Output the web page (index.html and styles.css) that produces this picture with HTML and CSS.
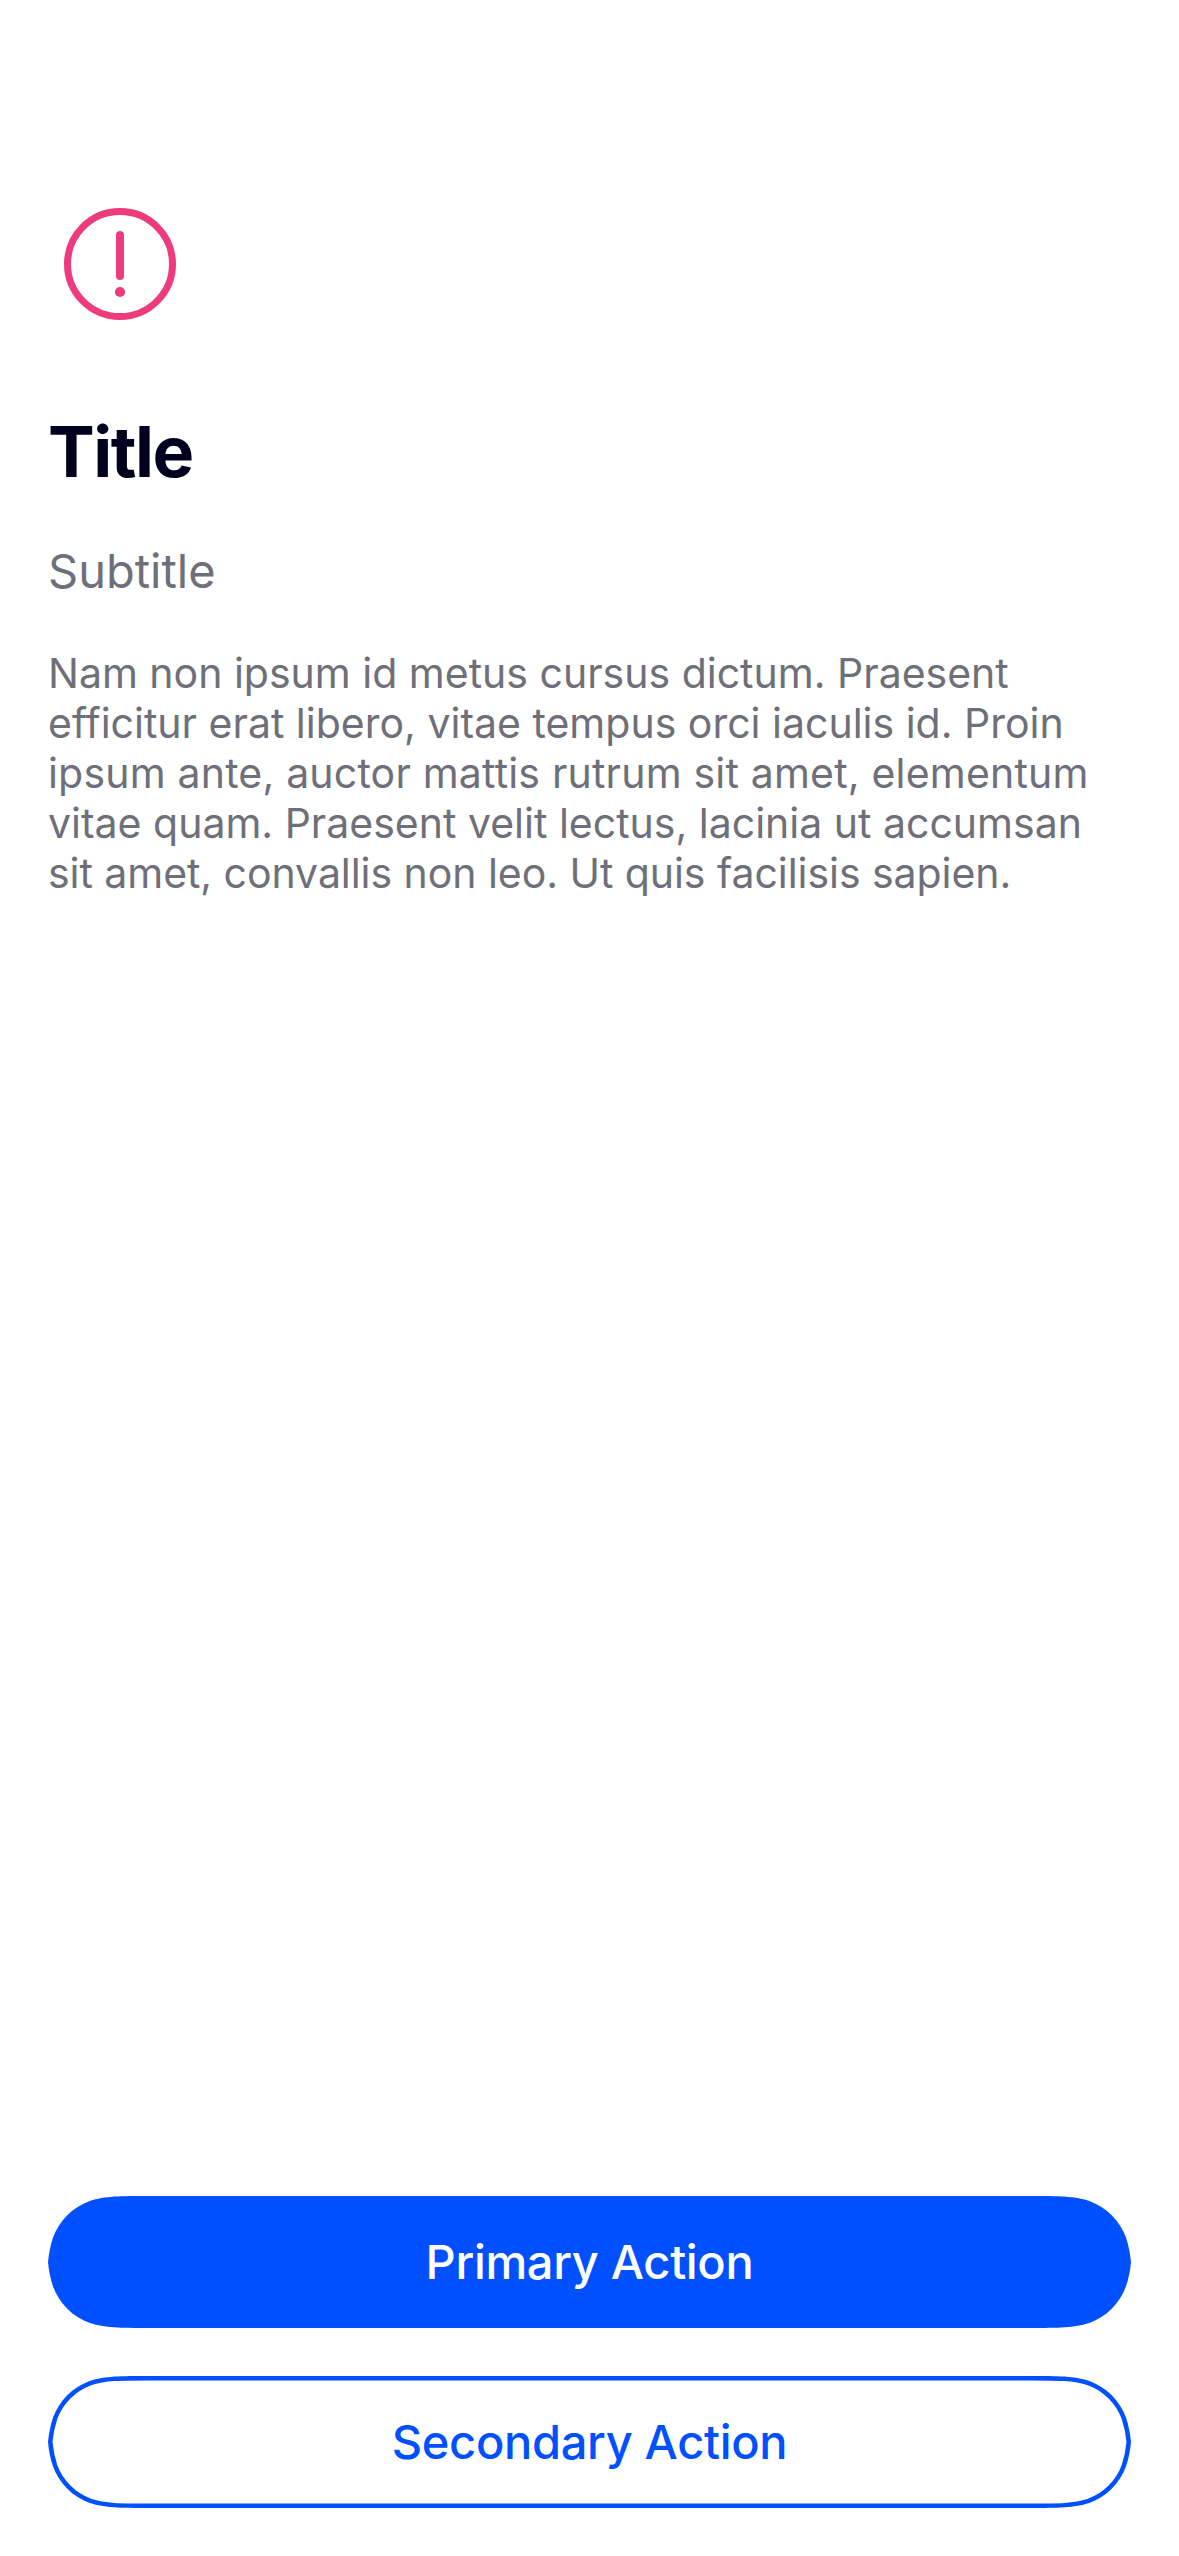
FILE: index.html
```html
<!DOCTYPE html>
<html lang="en">
<head>
<meta charset="utf-8">
<meta name="viewport" content="width=device-width">
<title>Alert</title>
<link rel="stylesheet" href="styles.css">
</head>
<body>
<main class="screen">
  <svg class="alert-icon" viewBox="0 0 144 144" aria-hidden="true">
    <circle class="alert-ring" cx="72" cy="72" r="52.5"/>
    <path class="alert-bar" d="M72 43v41"/>
    <circle class="alert-dot" cx="72" cy="100" r="5.1"/>
  </svg>
  <h1 class="title">Title</h1>
  <p class="subtitle">Subtitle</p>
  <p class="body">Nam non ipsum id metus cursus dictum. Praesent<br>efficitur erat libero, vitae tempus orci iaculis id. Proin<br><span class="loose">ipsum ante, auctor mattis rutrum sit amet, elementum</span><br>vitae quam. Praesent velit lectus, lacinia ut accumsan<br><span class="tight">sit amet, convallis non leo. Ut quis facilisis sapien.</span></p>
  <div class="actions">
    <button class="button primary" type="button">
      <svg class="button-shape" viewBox="0 0 1083 132" aria-hidden="true">
        <path d="M101 0H982C1011 0 1025.700 0 1041.300 4.940C1058.400 11.200 1071.800 24.600 1078.060 41.700C1080.500 49 1082.300 58 1083 66C1082.300 74 1080.500 83 1078.060 90.300C1071.800 107.400 1058.400 120.800 1041.300 127.060C1025.700 132 1011 132 982 132H101C72 132 57.300 132 41.700 127.060C24.600 120.800 11.200 107.400 4.940 90.300C2.500 83 .7 74 0 66C.7 58 2.500 49 4.940 41.700C11.200 24.600 24.600 11.200 41.700 4.940C57.300 0 72 0 101 0Z"/>
      </svg>
      <span class="button-label">Primary Action</span>
    </button>
    <button class="button secondary" type="button">
      <svg class="button-shape" viewBox="0 0 1083 132" aria-hidden="true">
        <clipPath id="pill"><path d="M101 0H982C1011 0 1025.700 0 1041.300 4.940C1058.400 11.200 1071.800 24.600 1078.060 41.700C1080.500 49 1082.300 58 1083 66C1082.300 74 1080.500 83 1078.060 90.300C1071.800 107.400 1058.400 120.800 1041.300 127.060C1025.700 132 1011 132 982 132H101C72 132 57.300 132 41.700 127.060C24.600 120.800 11.200 107.400 4.940 90.300C2.500 83 .7 74 0 66C.7 58 2.500 49 4.940 41.700C11.200 24.600 24.600 11.200 41.700 4.940C57.300 0 72 0 101 0Z"/></clipPath>
        <path clip-path="url(#pill)" d="M101 0H982C1011 0 1025.700 0 1041.300 4.940C1058.400 11.200 1071.800 24.600 1078.060 41.700C1080.500 49 1082.300 58 1083 66C1082.300 74 1080.500 83 1078.060 90.300C1071.800 107.400 1058.400 120.800 1041.300 127.060C1025.700 132 1011 132 982 132H101C72 132 57.300 132 41.700 127.060C24.600 120.800 11.200 107.400 4.940 90.300C2.500 83 .7 74 0 66C.7 58 2.500 49 4.940 41.700C11.200 24.600 24.600 11.200 41.700 4.940C57.300 0 72 0 101 0Z"/>
      </svg>
      <span class="button-label">Secondary Action</span>
    </button>
  </div>
</main>
</body>
</html>
```
FILE: styles.css
```css
* { box-sizing: border-box; }
body { margin: 0; background: #fff; font-family: Inter, "Liberation Sans", sans-serif; }
.screen { display: flex; flex-direction: column; height: 2556px; padding: 192px 48px 48px; }
.alert-icon { display: block; width: 144px; height: 144px; }
.alert-ring { fill: none; stroke: #ed3b7e; stroke-width: 7; }
.alert-bar { fill: none; stroke: #ed3b7e; stroke-width: 8; stroke-linecap: round; }
.alert-dot { fill: #ed3b7e; }
.title { margin: 71px 0 0; font-size: 70px; line-height: 90px; font-weight: 700; letter-spacing: -1.5px; color: #00001e; }
.subtitle { margin: 44px 0 0; font-size: 47px; line-height: 60px; color: #6f6f79; }
.body { margin: 47px 0 0; font-size: 41px; line-height: 50px; color: #6f6f79; white-space: nowrap; }
.loose { letter-spacing: 0.19px; }
.tight { letter-spacing: -0.05px; }
.actions { display: flex; flex-direction: column; gap: 48px; margin-top: auto; }
.button {
  position: relative;
  height: 132px;
  padding: 0;
  border: 0;
  background: none;
  font: 500 47px/60px Inter, "Liberation Sans", sans-serif;
  letter-spacing: -0.32px;
}
.button-shape { position: absolute; inset: 0; width: 100%; height: 100%; }
.button-label { position: relative; }
.primary { color: #fff; }
.primary .button-shape { fill: #0050ff; }
.secondary { color: #0050ff; }
.secondary .button-shape { fill: none; stroke: #0050ff; stroke-width: 9; }
```
